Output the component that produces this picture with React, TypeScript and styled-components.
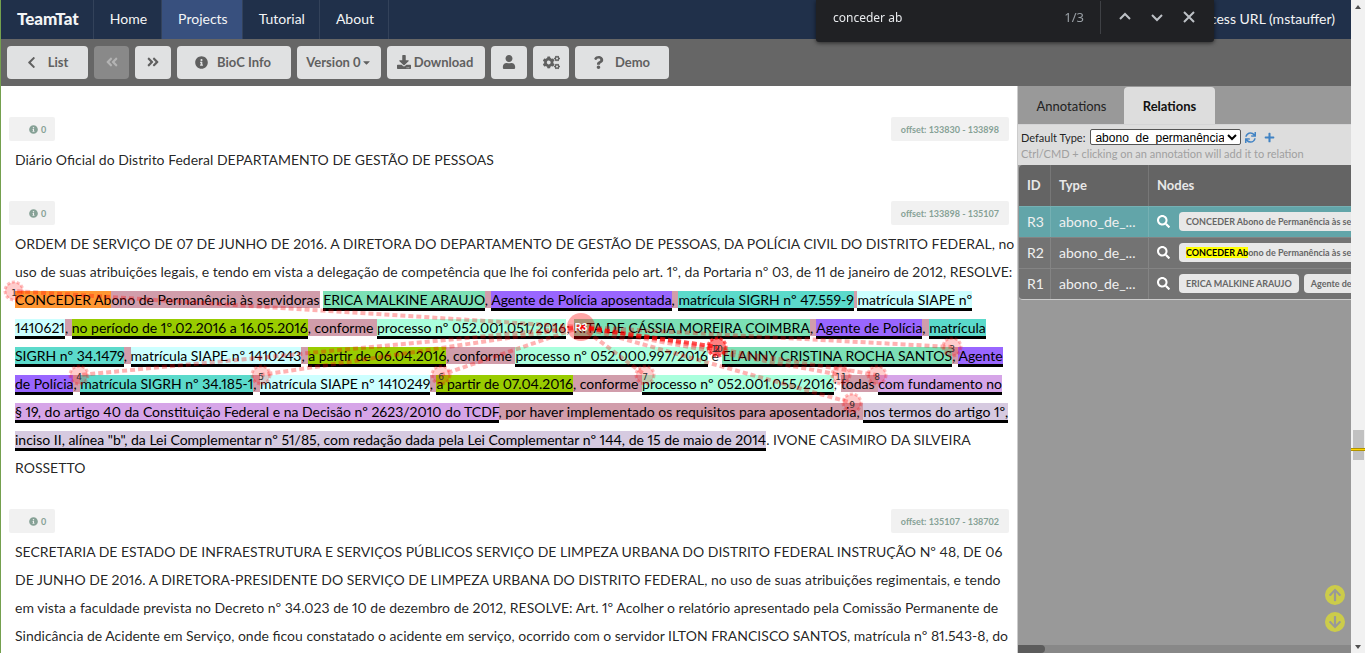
import React from "react";
import styled, { createGlobalStyle, css } from "styled-components";
import {
  FaChevronLeft,
  FaAngleDoubleLeft,
  FaAngleDoubleRight,
  FaInfoCircle,
  FaCaretDown,
  FaDownload,
  FaUser,
  FaCogs,
  FaQuestion,
  FaSearch,
  FaPlus,
  FaSync,
  FaArrowUp,
  FaArrowDown,
} from "react-icons/fa";

const Global = createGlobalStyle`
  *, *::before, *::after { box-sizing: border-box; }
  body {
    margin: 0;
    font-family: Lato, "Liberation Sans", sans-serif;
    font-size: 14px;
    color: rgba(0, 0, 0, 0.87);
    background: #fff;
  }
  button, input { font-family: inherit; }
`;

const Window = styled.div`
  display: flex;
  height: 100vh;
  overflow: hidden;
`;

const Page = styled.div`
  flex: 1;
  min-width: 0;
  display: flex;
  flex-direction: column;
  border-left: 1px solid #74a04e;
`;

const NavBar = styled.nav`
  display: flex;
  height: 39px;
  flex: none;
  background: #20304a;
`;

const NavLink = styled.a<{ $active?: boolean; $brand?: boolean; $end?: boolean }>`
  display: flex;
  align-items: center;
  padding: 0 ${(p) => (p.$end ? 16 : 14)}px 2px 16px;
  color: #f4f5f6;
  text-decoration: none;
  white-space: nowrap;
  border-right: ${(p) => (p.$end ? "none" : "1px solid #33425a")};
  background: ${(p) => (p.$active ? "#38507e" : "transparent")};
  font-size: ${(p) => (p.$brand ? 17 : 14)}px;
  font-weight: ${(p) => (p.$brand ? 900 : 400)};
  margin-left: ${(p) => (p.$end ? "auto" : "0")};
`;

const ToolBar = styled.div`
  display: flex;
  flex: none;
  gap: 6px;
  height: 47px;
  padding: 7px 6px;
  background: #666;
`;

const ToolButton = styled.button<{ $w: number; $gap?: number }>`
  display: flex;
  align-items: center;
  justify-content: center;
  gap: ${(p) => p.$gap ?? 0}px;
  width: ${(p) => p.$w}px;
  height: 33px;
  padding: ${(p) => (p.$gap ? "0 2px 1px 0" : "0 0 1px")};
  border: 0;
  border-radius: 4px;
  background: #e0e1e2;
  color: #606060;
  font-size: 13px;
  font-weight: 700;
  white-space: nowrap;
  &:disabled {
    background: #898989;
    color: #b3b3b3;
  }
`;

const Body = styled.div`
  display: flex;
  flex: 1;
  min-height: 0;
`;

const DocPane = styled.main`
  position: relative;
  flex: 1;
  min-width: 0;
  overflow: hidden;
  padding-top: 31px;
`;

const Passage = styled.section`
  padding: 0 8px;
  margin-bottom: 27px;
`;

const PassageHead = styled.div`
  display: flex;
  justify-content: space-between;
  margin-bottom: 5px;
`;

const Tag = styled.span<{ $info?: boolean }>`
  display: flex;
  align-items: center;
  gap: 3px;
  height: 24px;
  padding: 0 10px;
  ${(p) => p.$info && css`padding: 0 9px 0 20px;`}
  border-radius: 2px;
  background: #f1f1f1;
  color: #86a196;
  font-size: 9px;
  font-weight: 700;
`;

const Text = styled.p`
  margin: 0;
  padding: 0 6px;
  line-height: 28px;
  white-space: nowrap;
  font-variant-numeric: proportional-nums;
`;

const Sentence = styled.span`
  background: #d19dab;
  color: #000;
`;

const Found = styled.span`
  background: #ff9632;
`;

const kinds = {
  name: "#7ce0b5",
  role: "#9966ff",
  sigrh: "#5bdacb",
  siape: "#ccffff",
  period: "#99cc00",
  process: "#aaffdd",
  law: "#d6a5e8",
  article: "#d6cae0",
};

const Mark = styled.span<{ $kind: keyof typeof kinds }>`
  background: ${(p) => kinds[p.$kind]};
  border-bottom: 3px solid #000;
  color: #000;
`;

const Graph = styled.svg`
  position: absolute;
  left: 0;
  top: 0;
  width: 100%;
  height: 100%;
  pointer-events: none;
`;

const Panel = styled.aside`
  display: flex;
  flex-direction: column;
  flex: none;
  width: 334px;
  overflow: hidden;
  border-left: 1px solid #ccc;
  background: #999;
`;

const Tabs = styled.div`
  display: flex;
  height: 38px;
  padding: 1px 0 0 1px;
`;

const Tab = styled.button<{ $active?: boolean }>`
  width: ${(p) => (p.$active ? 91 : 105)}px;
  padding: 0;
  border: 0;
  border-radius: 4px 4px 0 0;
  background: ${(p) => (p.$active ? "#ddd" : "transparent")};
  color: ${(p) => (p.$active ? "#111" : "#222")};
  font-size: 13px;
  font-weight: ${(p) => (p.$active ? 700 : 400)};
`;

const Settings = styled.div`
  height: 41px;
  padding: 4px 3px 0;
  border-top: 1px solid #d4d4d5;
  background: #ddd;
  font-size: 11px;
`;

const Row = styled.div`
  display: flex;
  align-items: center;
  height: 16px;
  margin-bottom: 1px;
`;

const Select = styled.select`
  width: 151px;
  height: 16px;
  margin-left: 5px;
  padding: 0;
  border: 1px solid #555;
  border-radius: 2px;
  background-color: #fff;
  color: #000;
  font-family: "Liberation Sans", Arial, sans-serif;
  font-size: 12px;
`;

const IconButton = styled.button`
  display: flex;
  padding: 0;
  margin-left: 4px;
  border: 0;
  background: none;
  color: #4183c4;
  font-size: 11px;
  & + & { margin-left: 8px; }
`;

const Hint = styled.div`
  line-height: 16px;
  font-size: 11px;
  color: #a0a0a0;
`;

const Table = styled.table`
  width: 560px;
  margin-left: 1px;
  table-layout: fixed;
  border-collapse: separate;
  border-spacing: 0;
  border-bottom: 1px solid #ccc;
  border-radius: 4px 0 0 4px;
  overflow: hidden;
  flex: none;
`;

const Th = styled.th<{ $w?: number }>`
  width: ${(p) => (p.$w ? `${p.$w}px` : "auto")};
  height: 41px;
  padding: 0 8px 1px;
  border-right: 1px solid #777;
  background: #646464;
  color: #e8e8e8;
  font-size: 13px;
  font-weight: 700;
  text-align: left;
`;

const Tr = styled.tr<{ $active?: boolean }>`
  background: ${(p) => (p.$active ? "#62a5a9" : "#737373")};
  color: #f0f0f0;
`;

const Td = styled.td`
  height: 31px;
  padding: 0 8px 2px;
  border-top: 1px solid rgba(255, 255, 255, 0.12);
  border-right: 1px solid rgba(255, 255, 255, 0.12);
  white-space: nowrap;
`;

const Nodes = styled.div`
  display: flex;
  align-items: center;
  gap: 5px;
`;

const SearchButton = styled.button`
  display: flex;
  padding: 0;
  margin-right: 4px;
  border: 0;
  background: none;
  color: #fff;
  font-size: 13px;
`;

const Chip = styled.span`
  height: 19px;
  padding: 0 7px;
  border-radius: 4px;
  background: #e8e8e8;
  color: #666;
  font-size: 9px;
  font-weight: 700;
  line-height: 20px;
`;

const Hit = styled.mark`
  background: #ff0;
  color: #000;
`;

const PanelScroll = styled.div`
  height: 8px;
  margin-top: auto;
  background: #888;
  &::before {
    content: "";
    display: block;
    width: 27px;
    height: 8px;
    border-radius: 0 4px 4px 0;
    background: #5c5c5c;
  }
`;

const ScrollBar = styled.div`
  display: flex;
  flex-direction: column;
  flex: none;
  width: 14px;
  background: #f1f1f1;
`;

const Thumb = styled.div`
  flex: none;
  width: 11px;
  height: 30px;
  margin: 0 auto;
  padding-top: 18px;
  background: #c1c1c1;
`;

const HitLine = styled.div`
  height: 3px;
  margin: 0 -2px;
  border: 1px solid #b09300;
  border-width: 1px 0;
  background: #ffd500;
`;

const Space = styled.div<{ $grow: number }>`
  flex: ${(p) => p.$grow} 1 0;
`;

const ScrollArrow = styled.svg`
  display: block;
  flex: none;
  width: 14px;
  height: 14px;
  fill: #505050;
`;

const FindBar = styled.div`
  position: fixed;
  top: 0;
  right: 151px;
  display: flex;
  align-items: center;
  width: 398px;
  height: 42px;
  padding: 0 17px 8px;
  border-radius: 0 0 3px 3px;
  background: #202124;
  box-shadow: 0 1px 4px rgba(0, 0, 0, 0.6);
  color: #9aa0a6;
  font-family: "Noto Sans", sans-serif;
  font-size: 13px;
`;

const FindInput = styled.input`
  flex: 1;
  min-width: 0;
  padding: 0;
  border: 0;
  outline: 0;
  background: none;
  color: #e8eaed;
  font-size: 12px;
`;

const FindDivider = styled.span`
  width: 1px;
  height: 33px;
  margin: 0 16px;
  background: #3f4145;
`;

const FindButton = styled.button`
  display: flex;
  width: 16px;
  padding: 0;
  border: 0;
  background: none;
  & + & { margin-left: 16px; }
  svg { width: 16px; height: 16px; fill: none; stroke: #bdc1c6; stroke-width: 2; }
`;

const Jump = styled.div`
  position: fixed;
  right: 20px;
  bottom: 21px;
  display: flex;
  flex-direction: column;
  gap: 7px;
`;

const JumpButton = styled.button`
  display: flex;
  align-items: center;
  justify-content: center;
  width: 20px;
  height: 20px;
  padding: 0;
  border: 0;
  border-radius: 50%;
  background: #cccc4a;
  color: #999;
  font-size: 14px;
`;

const hub = { x: 580, y: 241 };
const nodes = [
  { id: "1", x: 13, y: 205 },
  { id: "2", x: 716, y: 261 },
  { id: "2", x: 716, y: 261 },
  { id: "10", x: 716, y: 261 },
  { id: "3", x: 951, y: 261 },
  { id: "4", x: 78, y: 289 },
  { id: "5", x: 260, y: 289 },
  { id: "6", x: 440, y: 289 },
  { id: "7", x: 644, y: 289 },
  { id: "8", x: 876, y: 289 },
  { id: "11", x: 840, y: 289 },
  { id: "9", x: 851, y: 317 },
];

function RelationGraph() {
  return (
    <Graph aria-hidden="true">
      <g stroke="#ff0000" strokeOpacity="0.3" strokeWidth="4" strokeDasharray="5 3">
        {nodes.map((n, i) => (
          <line key={i} x1={hub.x} y1={hub.y} x2={n.x} y2={n.y} />
        ))}
      </g>
      {nodes.map((n, i) => (
        <g key={i}>
          <circle cx={n.x} cy={n.y} r="9" fill="#ff0000" fillOpacity="0.2" stroke="#ff0000" strokeOpacity="0.25" strokeWidth="3" strokeDasharray="3 2" />
          <text x={n.x} y={n.y + 5} textAnchor="middle" fontSize="9" fill="#333" fontFamily="DejaVu Sans, sans-serif">{n.id}</text>
        </g>
      ))}
      <circle cx={hub.x} cy={hub.y} r="14" fill="#ff0000" fillOpacity="0.35" />
      <text x={hub.x} y={hub.y + 4} textAnchor="middle" fontSize="10" fontWeight="700" fill="#fff" fontFamily="Liberation Sans, sans-serif">R3</text>
    </Graph>
  );
}

function PassageTags({ offset }: { offset: string }) {
  return (
    <PassageHead>
      <Tag $info><FaInfoCircle size={9} /> 0</Tag>
      <Tag>offset: {offset}</Tag>
    </PassageHead>
  );
}

function RelationRow({ id, active, children }: { id: string; active?: boolean; children: React.ReactNode }) {
  return (
    <Tr $active={active}>
      <Td>{id}</Td>
      <Td>abono_de_...</Td>
      <Td>
        <Nodes>
          <SearchButton aria-label={`Find ${id}`}><FaSearch /></SearchButton>
          {children}
        </Nodes>
      </Td>
    </Tr>
  );
}

export default function App() {
  return (
    <Window>
      <Global />
      <Page>
        <NavBar>
          <NavLink href="#" $brand>TeamTat</NavLink>
          <NavLink href="#">Home</NavLink>
          <NavLink href="#" $active>Projects</NavLink>
          <NavLink href="#">Tutorial</NavLink>
          <NavLink href="#">About</NavLink>
          <NavLink href="#" $end>Access URL (mstauffer)</NavLink>
        </NavBar>
        <ToolBar>
          <ToolButton $w={81} $gap={10}><FaChevronLeft size={13} /> List</ToolButton>
          <ToolButton $w={35} disabled aria-label="Previous"><FaAngleDoubleLeft size={14} /></ToolButton>
          <ToolButton $w={36} aria-label="Next"><FaAngleDoubleRight size={14} /></ToolButton>
          <ToolButton $w={114} $gap={9}><FaInfoCircle size={13} /> BioC Info</ToolButton>
          <ToolButton $w={84}>Version 0<FaCaretDown size={11} /></ToolButton>
          <ToolButton $w={98} $gap={3}><FaDownload size={14} /> Download</ToolButton>
          <ToolButton $w={36} aria-label="User"><FaUser size={14} /></ToolButton>
          <ToolButton $w={36} aria-label="Settings"><FaCogs size={17} /></ToolButton>
          <ToolButton $w={94} $gap={10}><FaQuestion size={13} /> Demo</ToolButton>
        </ToolBar>
        <Body>
          <DocPane>
            <Passage>
              <PassageTags offset="133830 - 133898" />
              <Text>Diário Oficial do Distrito Federal DEPARTAMENTO DE GESTÃO DE PESSOAS</Text>
            </Passage>
            <Passage>
              <PassageTags offset="133898 - 135107" />
              <Text>
                ORDEM DE SERVIÇO DE 07 DE JUNHO DE 2016. A DIRETORA DO DEPARTAMENTO DE GESTÃO DE PESSOAS, DA POLÍCIA
                CIVIL DO DISTRITO FEDERAL, no<br />
                uso de suas atribuições legais, e tendo em vista a delegação de
                competência que lhe foi conferida pelo art. 1º, da Portaria nº 03, de 11 de janeiro de 2012, RESOLVE:<br />
                <Sentence><Found>CONCEDER Ab</Found>ono de Permanência às servidoras</Sentence>{" "}
                <Sentence>
                  <Mark $kind="name">ERICA MALKINE ARAUJO</Mark>, <Mark $kind="role">Agente de Polícia aposentada</Mark>,{" "}
                  <Mark $kind="sigrh">matrícula SIGRH nº 47.559-9</Mark> <Mark $kind="siape">matrícula SIAPE nº<br />1410621</Mark>,{" "}
                  <Mark $kind="period">no período de 1º.02.2016 a 16.05.2016</Mark>, conforme{" "}
                  <Mark $kind="process">processo nº 052.001.051/2016</Mark>
                </Sentence>
                ; <Sentence>
                  <Mark $kind="name">RITA DE CÁSSIA MOREIRA COIMBRA</Mark>, <Mark $kind="role">Agente de Polícia</Mark>,{" "}
                  <Mark $kind="sigrh">matrícula<br />SIGRH nº 34.1479</Mark>, <Mark $kind="siape">matrícula SIAPE nº 1410243</Mark>,{" "}
                  <Mark $kind="period">a partir de 06.04.2016</Mark>, conforme{" "}
                  <Mark $kind="process">processo nº 052.000.997/2016</Mark>
                </Sentence>{" "}
                e <Sentence>
                  <Mark $kind="name">ELANNY CRISTINA ROCHA SANTOS</Mark>, <Mark $kind="role">Agente<br />de Polícia</Mark>,{" "}
                  <Mark $kind="sigrh">matrícula SIGRH nº 34.185-1</Mark>, <Mark $kind="siape">matrícula SIAPE nº 1410249</Mark>,{" "}
                  <Mark $kind="period">a partir de 07.04.2016</Mark>, conforme{" "}
                  <Mark $kind="process">processo nº 052.001.055/2016</Mark>
                </Sentence>
                ; <Sentence>
                  todas <Mark $kind="law">com fundamento no<br />§ 19, do artigo 40 da Constituição Federal e na Decisão nº 2623/2010 do TCDF</Mark>
                  , por haver implementado os requisitos para aposentadoria,{" "}
                  <Mark $kind="article">nos termos do artigo 1º,<br />inciso II, alínea "b", da Lei Complementar nº 51/85, com redação dada pela Lei Complementar nº 144, de 15 de maio de 2014</Mark>
                </Sentence>
                . IVONE CASIMIRO DA SILVEIRA<br />ROSSETTO
              </Text>
            </Passage>
            <Passage>
              <PassageTags offset="135107 - 138702" />
              <Text>
                SECRETARIA DE ESTADO DE INFRAESTRUTURA E SERVIÇOS PÚBLICOS SERVIÇO DE LIMPEZA URBANA DO DISTRITO
                FEDERAL INSTRUÇÃO Nº 48, DE 06<br />
                DE JUNHO DE 2016. A DIRETORA-PRESIDENTE DO SERVIÇO DE LIMPEZA URBANA DO
                DISTRITO FEDERAL, no uso de suas atribuições regimentais, e tendo<br />
                em vista a faculdade prevista no
                Decreto nº 34.023 de 10 de dezembro de 2012, RESOLVE: Art. 1º Acolher o relatório apresentado pela
                Comissão Permanente de<br />
                Sindicância de Acidente em Serviço, onde ficou constatado o acidente em serviço,
                ocorrido com o servidor ILTON FRANCISCO SANTOS, matrícula nº 81.543-8, do
              </Text>
            </Passage>
            <RelationGraph />
          </DocPane>
          <Panel>
            <Tabs>
              <Tab>Annotations</Tab>
              <Tab $active>Relations</Tab>
            </Tabs>
            <Settings>
              <Row>
                <label htmlFor="type">Default Type:</label>
                <Select id="type" defaultValue="abono_de_permanência"><option>abono_de_permanência</option></Select>
                <IconButton aria-label="Refresh"><FaSync /></IconButton>
                <IconButton aria-label="Add"><FaPlus /></IconButton>
              </Row>
              <Hint>Ctrl/CMD + clicking on an annotation will add it to relation</Hint>
            </Settings>
            <Table>
              <thead>
                <tr><Th $w={32}>ID</Th><Th $w={98}>Type</Th><Th>Nodes</Th></tr>
              </thead>
              <tbody>
                <RelationRow id="R3" active>
                  <Chip>CONCEDER Abono de Permanência às servidoras</Chip>
                </RelationRow>
                <RelationRow id="R2">
                  <Chip><Hit>CONCEDER Ab</Hit>ono de Permanência às servidoras</Chip>
                </RelationRow>
                <RelationRow id="R1">
                  <Chip>ERICA MALKINE ARAUJO</Chip>
                  <Chip>Agente de Polícia aposentada</Chip>
                </RelationRow>
              </tbody>
            </Table>
            <PanelScroll />
          </Panel>
        </Body>
      </Page>
      <ScrollBar>
        <ScrollArrow viewBox="0 0 14 14"><path d="M4 9 L7 5 L10 9Z" /></ScrollArrow>
        <Space $grow={416} />
        <Thumb><HitLine /></Thumb>
        <Space $grow={179} />
        <ScrollArrow viewBox="0 0 14 14"><path d="M4 6 L7 10 L10 6Z" /></ScrollArrow>
      </ScrollBar>
      <FindBar>
        <FindInput aria-label="Find in page" defaultValue="conceder ab" />
        <span>1/3</span>
        <FindDivider />
        <FindButton aria-label="Previous match"><svg viewBox="0 0 16 16"><path d="M3 10 L8 5 L13 10" /></svg></FindButton>
        <FindButton aria-label="Next match"><svg viewBox="0 0 16 16"><path d="M3 6 L8 11 L13 6" /></svg></FindButton>
        <FindButton aria-label="Close"><svg viewBox="0 0 16 16"><path d="M3 3 L13 13 M13 3 L3 13" /></svg></FindButton>
      </FindBar>
      <Jump>
        <JumpButton aria-label="Previous passage"><FaArrowUp /></JumpButton>
        <JumpButton aria-label="Next passage"><FaArrowDown /></JumpButton>
      </Jump>
    </Window>
  );
}
